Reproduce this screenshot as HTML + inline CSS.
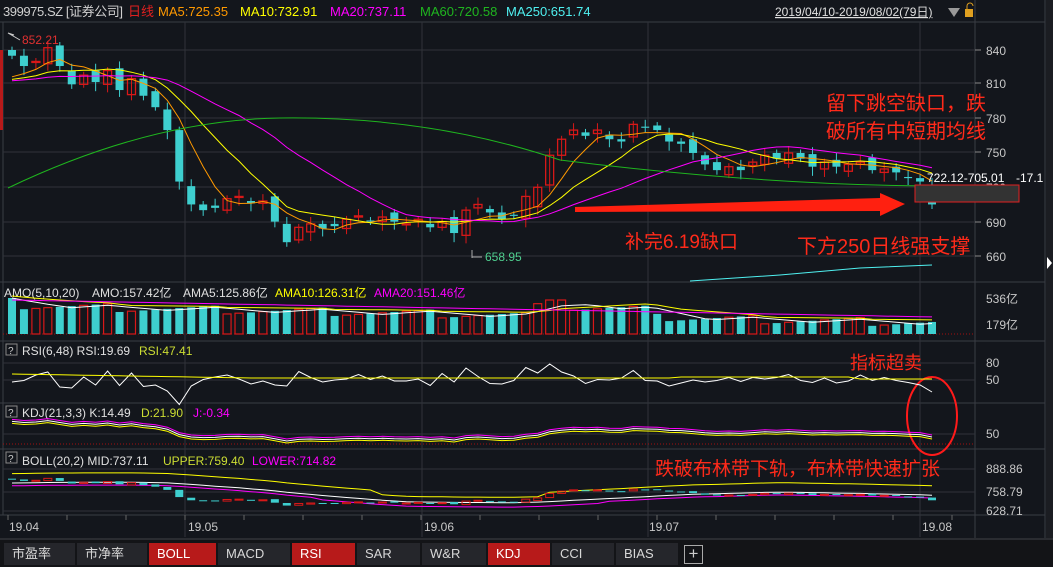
<!DOCTYPE html>
<html><head><meta charset="utf-8">
<style>
html,body{margin:0;padding:0;background:#13161c;width:1053px;height:565px;overflow:hidden;font-family:"Liberation Sans","Noto Sans CJK SC",sans-serif}
svg{position:absolute;left:0;top:0}
.tabs{position:absolute;left:0;top:538px;width:1053px;height:27px;background:#131417;border-top:2px solid #2a2c31}
.tab{position:absolute;top:3px;height:22px;background:#25262b;color:#d8d8d8;font-size:13px;line-height:22px;padding-left:8px;box-sizing:border-box}
.tab.r{background:#b71a1a;color:#fff}
</style></head><body>
<svg id="s" width="1053" height="565" xmlns="http://www.w3.org/2000/svg"></svg>
<div class="tabs">
<div class="tab" style="left:4px;width:71px">市盈率</div>
<div class="tab" style="left:77px;width:70px">市净率</div>
<div class="tab r" style="left:149px;width:67px">BOLL</div>
<div class="tab" style="left:218px;width:72px">MACD</div>
<div class="tab r" style="left:292px;width:63px">RSI</div>
<div class="tab" style="left:357px;width:63px">SAR</div>
<div class="tab" style="left:422px;width:64px">W&amp;R</div>
<div class="tab r" style="left:488px;width:62px">KDJ</div>
<div class="tab" style="left:552px;width:62px">CCI</div>
<div class="tab" style="left:616px;width:62px">BIAS</div>
<div style="position:absolute;left:684px;top:5px;width:17px;height:17px;border:1px solid #aaa;color:#ccc;font-size:17px;line-height:16px;text-align:center">+</div>
</div>
<script>
const S=document.getElementById('s');let h='';
const add=t=>h+=t;
const txt=(x,y,s,c,sz,extra)=>add(`<text x="${x}" y="${y}" fill="${c}" font-size="${sz||12}" ${extra||''}>${s}</text>`);
const G='#30333a';
[22,282,341,403,449,515].forEach(y=>add(`<line x1="0" y1="${y}" x2="1045" y2="${y}" stroke="#3a3d44"/>`));
add(`<line x1="975" y1="0" x2="975" y2="538" stroke="#3a3d44"/><line x1="1045" y1="0" x2="1045" y2="538" stroke="#3a3d44"/>`);
add(`<rect x="1046" y="0" width="7" height="538" fill="#1b1d22"/><polygon points="1047,257 1052,263 1047,269" fill="#fff"/>`);
add(`<line x1="3" y1="22" x2="3" y2="515" stroke="#3a3d44"/><rect x="0" y="50" width="3" height="80" fill="#b71a1a"/>`);
[50,83,118,152,187,222,256].forEach(y=>add(`<line x1="3" y1="${y}" x2="975" y2="${y}" stroke="${G}"/><line x1="975" y1="${y}" x2="981" y2="${y}" stroke="#888"/>`));
[[840,50],[810,83],[780,118],[750,152],[720,187],[690,222],[660,256]].forEach(a=>txt(986,a[1]+5,a[0],'#c8c8c8',12));
[363,380].forEach(y=>add(`<line x1="3" y1="${y}" x2="975" y2="${y}" stroke="${G}"/>`));
add(`<line x1="3" y1="434" x2="975" y2="434" stroke="${G}"/>`);
[469,492,511].forEach(y=>add(`<line x1="3" y1="${y}" x2="975" y2="${y}" stroke="${G}"/>`));
[185,422,648,920].forEach(x=>add(`<line x1="${x}" y1="22" x2="${x}" y2="537" stroke="${G}"/>`));
add(`<line x1="3" y1="334" x2="975" y2="334" stroke="#a01010" stroke-dasharray="1,2"/><line x1="3" y1="444" x2="975" y2="444" stroke="#a01010" stroke-dasharray="1,2"/>`);
for(let x=8;x<975;x+=59)add(`<line x1="${x}" y1="515" x2="${x}" y2="520" stroke="#666"/>`);
[['19.04',9],['19.05',188],['19.06',424],['19.07',649],['19.08',922]].forEach(a=>txt(a[1],531,a[0],'#c8c8c8',12));
txt(986,303,'536亿','#c8c8c8',12);txt(986,329,'179亿','#c8c8c8',12);
txt(986,367,'80','#c8c8c8',12);txt(986,384,'50','#c8c8c8',12);txt(986,438,'50','#c8c8c8',12);
txt(986,473,'888.86','#c8c8c8',12);txt(986,496,'758.79','#c8c8c8',12);txt(986,515,'628.71','#c8c8c8',12);
const C=[835,826,830,842,826,810,818,812,822,805,815,800,790,770,
725,705,700,702,710,712,706,708,690,672,685,688,684,686,692,695,690,694,690,688,
692,685,690,680,700,705,698,692,695,712,720,748,762,770,765,770,762,760,775,
772,770,760,758,750,740,735,738,735,742,748,745,750,745,738,742,738,740,742,735,736,733,728,725,705];
const N=C.length,X=i=>12+i*(920/(N-1));
const Y=p=>50+(840-p)*1.144;
let O=C.map((c,i)=>i?C[i-1]+((i*7)%5-2)*2:840);
O[14]=770;O[77]=722;O[45]=722;O[44]=703;O[23]=688;
const hist=Array(60).fill(812);
const full=hist.concat(C);
const ma=n=>C.map((_,i)=>{let s=0;for(let k=0;k<n;k++)s+=full[60+i-k];return s/n});
const pl=(arr,f,col,w)=>add(`<polyline fill="none" stroke="${col}" stroke-width="${w||1}" points="${arr.map((v,i)=>X(i).toFixed(1)+','+f(v,i).toFixed(1)).join(' ')}"/>`);
const cw=8;
C.forEach((c,i)=>{const o=O[i],up=c>=o,x=X(i);const hi=Math.max(o,c)+3+(i*3)%6,lo=Math.min(o,c)-3-(i*5)%6;
const col=up?'#d81818':'#3ecfcf';
add(`<line x1="${x}" y1="${Y(hi)}" x2="${x}" y2="${Y(lo)}" stroke="${col}"/>`);
const y1=Y(Math.max(o,c)),hh=Math.max(1,Math.abs(Y(o)-Y(c)));
add(up?`<rect x="${x-cw/2}" y="${y1}" width="${cw}" height="${hh}" fill="none" stroke="${col}" stroke-width="1.3"/>`:`<rect x="${x-cw/2}" y="${y1}" width="${cw}" height="${hh}" fill="${col}"/>`);
});
pl(ma(5),v=>Y(v),'#ff9900');pl(ma(10),v=>Y(v),'#ffff00');pl(ma(20),v=>Y(v),'#ff00ff');
add(`<path d="M8,188 Q150,120 280,118 Q430,116 560,160 Q760,185 932,186" fill="none" stroke="#1fb51f"/>`);
add(`<polyline points="690,281 780,275 860,268 932,265" fill="none" stroke="#4ff0f0"/>`);
add(`<polyline points="20,40 8,33 14,35" fill="none" stroke="#ccc"/>`);txt(22,44,'852.21','#e03030',12);
add(`<line x1="472" y1="250" x2="472" y2="258" stroke="#aaa"/><line x1="472" y1="257" x2="482" y2="257" stroke="#aaa"/>`);txt(485,261,'658.95','#4fcf8f',12);
add(`<rect x="915" y="185" width="104" height="17" fill="#333" stroke="#e02020"/>`);
add(`<polygon points="575,207 880,198 880,193 905,204 880,216 880,211 575,212" fill="#ff2010"/>`);
txt(927,182,'722.12-705.01','#fff',12);txt(1016,182,'-17.1','#fff',12);
const R='#ff2a1a';
txt(826,110,'留下跳空缺口，跌',R,20);txt(826,138,'破所有中短期均线',R,20);
txt(625,248,'补完6.19缺口',R,19);txt(797,253,'下方250日线强支撑',R,20);
txt(850,369,'指标超卖',R,18);txt(655,475,'跌破布林带下轨，布林带快速扩张',R,19);
add(`<ellipse cx="932" cy="416" rx="25" ry="39" fill="none" stroke="#ff1a1a" stroke-width="2"/>`);
txt(3,16,'399975.SZ [证券公司]','#d0d0d0',13,'textLength="120"');txt(128,16,'日线','#e02020',13);
txt(158,16,'MA5:725.35','#ff9900',13);txt(240,16,'MA10:732.91','#ffff00',13);txt(330,16,'MA20:737.11','#ff00ff',13);
txt(420,16,'MA60:720.58','#1fb51f',13);txt(506,16,'MA250:651.74','#4ff0f0',13);
txt(775,16,'2019/04/10-2019/08/02(79日)','#e0e0e0',12,'text-decoration="underline"');
add(`<polygon points="948,8 960,8 954,17" fill="#999"/><rect x="965" y="9" width="8" height="8" fill="#e0a020"/><path d="M967,9 v-3 a3,3 0 0 1 6,0" fill="none" stroke="#e0a020"/>`);
txt(4,297,'AMO(5,10,20)','#e0e0e0',12);txt(92,297,'AMO:157.42亿','#e0e0e0',12);txt(183,297,'AMA5:125.86亿','#e0e0e0',12);
txt(275,297,'AMA10:126.31亿','#ffff00',12);txt(374,297,'AMA20:151.46亿','#ff00ff',12);
const V=C.map((c,i)=>{let b=28-i*0.22+((i*37)%9)-4;if(i<1)b=36;if(i>=44&&i<=54)b+=8;if(i==45||i==46)b=34;return Math.max(8,b)});
C.forEach((c,i)=>{const up=c>=O[i],x=X(i),v=V[i];add(up?`<rect x="${x-4}" y="${334-v}" width="8" height="${v}" fill="none" stroke="#d81818" stroke-width="1.2"/>`:`<rect x="${x-4}" y="${334-v}" width="8" height="${v}" fill="#3ecfcf"/>`)});
pl(V.map((v,i)=>{let s=0;for(let k=0;k<5;k++)s+=V[Math.max(0,i-k)];return s/5}),v=>334-v,'#fff');
pl(V.map((v,i)=>{let s=0;for(let k=0;k<10;k++)s+=V[Math.max(0,i-k)];return s/10+2}),v=>334-v,'#ffff00');
pl(V.map((v,i)=>34-i*0.22),v=>334-v,'#ff00ff');
const box=(y)=>add(`<rect x="6" y="${y}" width="11" height="11" fill="none" stroke="#888"/>`)+txt(8,y+10,'?','#ccc',10);
box(344);txt(22,355,'RSI(6,48) RSI:19.69','#e0e0e0',12);txt(139,355,'RSI:47.41','#ccdd33',12);
const RS=C.map((c,i)=>{const d=C[i]-C[Math.max(0,i-1)];return 382-d*0.5-((i*13)%7)});
RS[77]=392;RS[76]=385;
pl(RS,v=>v,'#fff');pl(C.map((c,i)=>i<20?374+i*0.2:378-(i>55?1:0)+(i>70?2:0)),v=>v,'#ffff00');
box(406);txt(22,417,'KDJ(21,3,3) K:14.49','#e0e0e0',12);txt(141,417,'D:21.90','#ccdd33',12);txt(193,417,'J:-0.34','#ff00ff',12);
const K=C.map(c=>440-(c-680)*0.12);
pl(K.map(v=>Math.min(445,v)),v=>v,'#fff');pl(K.map(v=>Math.min(444,v+2)),v=>v,'#ffff00');pl(K.map(v=>Math.min(446,v-2)),v=>v,'#ff00ff');
box(452);txt(22,465,'BOLL(20,2) MID:737.11','#e0e0e0',12);txt(163,465,'UPPER:759.40','#ccdd33',12);txt(252,465,'LOWER:714.82','#ff00ff',12);
const BY=p=>469+(888-p)*0.16;
const m20=ma(20);
pl(m20,v=>BY(v)+2,'#fff');pl(m20.map((v,i)=>v+40+(i>30&&i<45?-25:0)),v=>BY(v)-1,'#ffff00');pl(m20.map((v,i)=>v-30-(i>25&&i<50?10:0)),v=>BY(v),'#ff00ff');
C.forEach((c,i)=>{const o=O[i],up=c>=o,x=X(i);const y1=BY(Math.max(o,c))+2,hh=Math.max(1,Math.abs(BY(o)-BY(c)));
add(up?`<rect x="${x-4}" y="${y1}" width="8" height="${hh}" fill="none" stroke="#d81818"/>`:`<rect x="${x-4}" y="${y1}" width="8" height="${hh}" fill="#3ecfcf"/>`)});
S.innerHTML=h;
</script>
</body></html>
